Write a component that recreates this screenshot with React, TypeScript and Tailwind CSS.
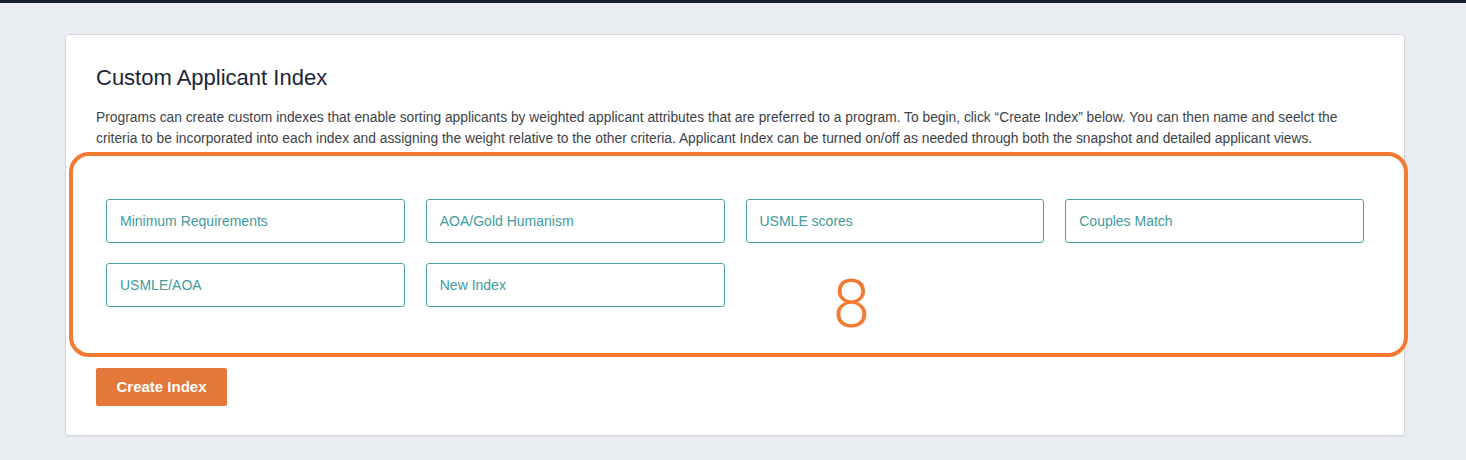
import React from "react";

const indexes = [
  "Minimum Requirements",
  "AOA/Gold Humanism",
  "USMLE scores",
  "Couples Match",
  "USMLE/AOA",
  "New Index",
];

const IndexField = ({ label }: { label: string }) => (
  <div className="flex h-[44px] items-center rounded-[3px] border border-[#4da2a4] bg-white px-[13px] text-[14px] text-[#3f9b9e]">
    {label}
  </div>
);

export default function App() {
  return (
    <div
      className="relative min-h-[460px] w-full bg-[#e9edf1]"
      style={{ fontFamily: '"Liberation Sans", Arial, sans-serif' }}
    >
      <div className="h-[3px] w-full bg-[#141f33]" />

      <div className="ml-[65px] mt-[31px] w-[1340px] rounded-[4px] border border-[#d3d7dc] bg-white px-[30px] pb-[29px] pt-[29px] shadow-[0_1px_2px_rgba(0,0,0,0.06)]">
        <h1 className="text-[22px] leading-[28px] text-[#1c2536]">Custom Applicant Index</h1>

        <p className="mt-[15px] w-[1275px] text-[13.8px] leading-[21px] text-[#3d4248]">
          Programs can create custom indexes that enable sorting applicants by weighted applicant attributes
          that are preferred to a program. To begin, click “Create Index” below. You can then name and seelct the
          <br />
          criteria to be incorporated into each index and assigning the weight relative to the other criteria.
          Applicant Index can be turned on/off as needed through both the snapshot and detailed applicant views.
        </p>

        <div className="relative ml-[-27px] mt-[3px] w-[1339px] rounded-[20px] border-4 border-[#f27a32] pb-[46px] pl-[33px] pr-[40px] pt-[43px]">
          <div className="grid grid-cols-4 gap-x-[21px] gap-y-[20px]">
            {indexes.map((name) => (
              <IndexField key={name} label={name} />
            ))}
          </div>
          <span
            className="absolute left-[760px] top-[116px] text-[66px] font-light leading-none text-[#f27a32]"
            style={{ fontFamily: "Roboto, sans-serif" }}
          >
            8
          </span>
        </div>

        <button className="mt-[11px] h-[38px] w-[131px] rounded-[2px] bg-[#e4783a] text-[15px] font-bold text-white">
          Create Index
        </button>
      </div>
    </div>
  );
}
